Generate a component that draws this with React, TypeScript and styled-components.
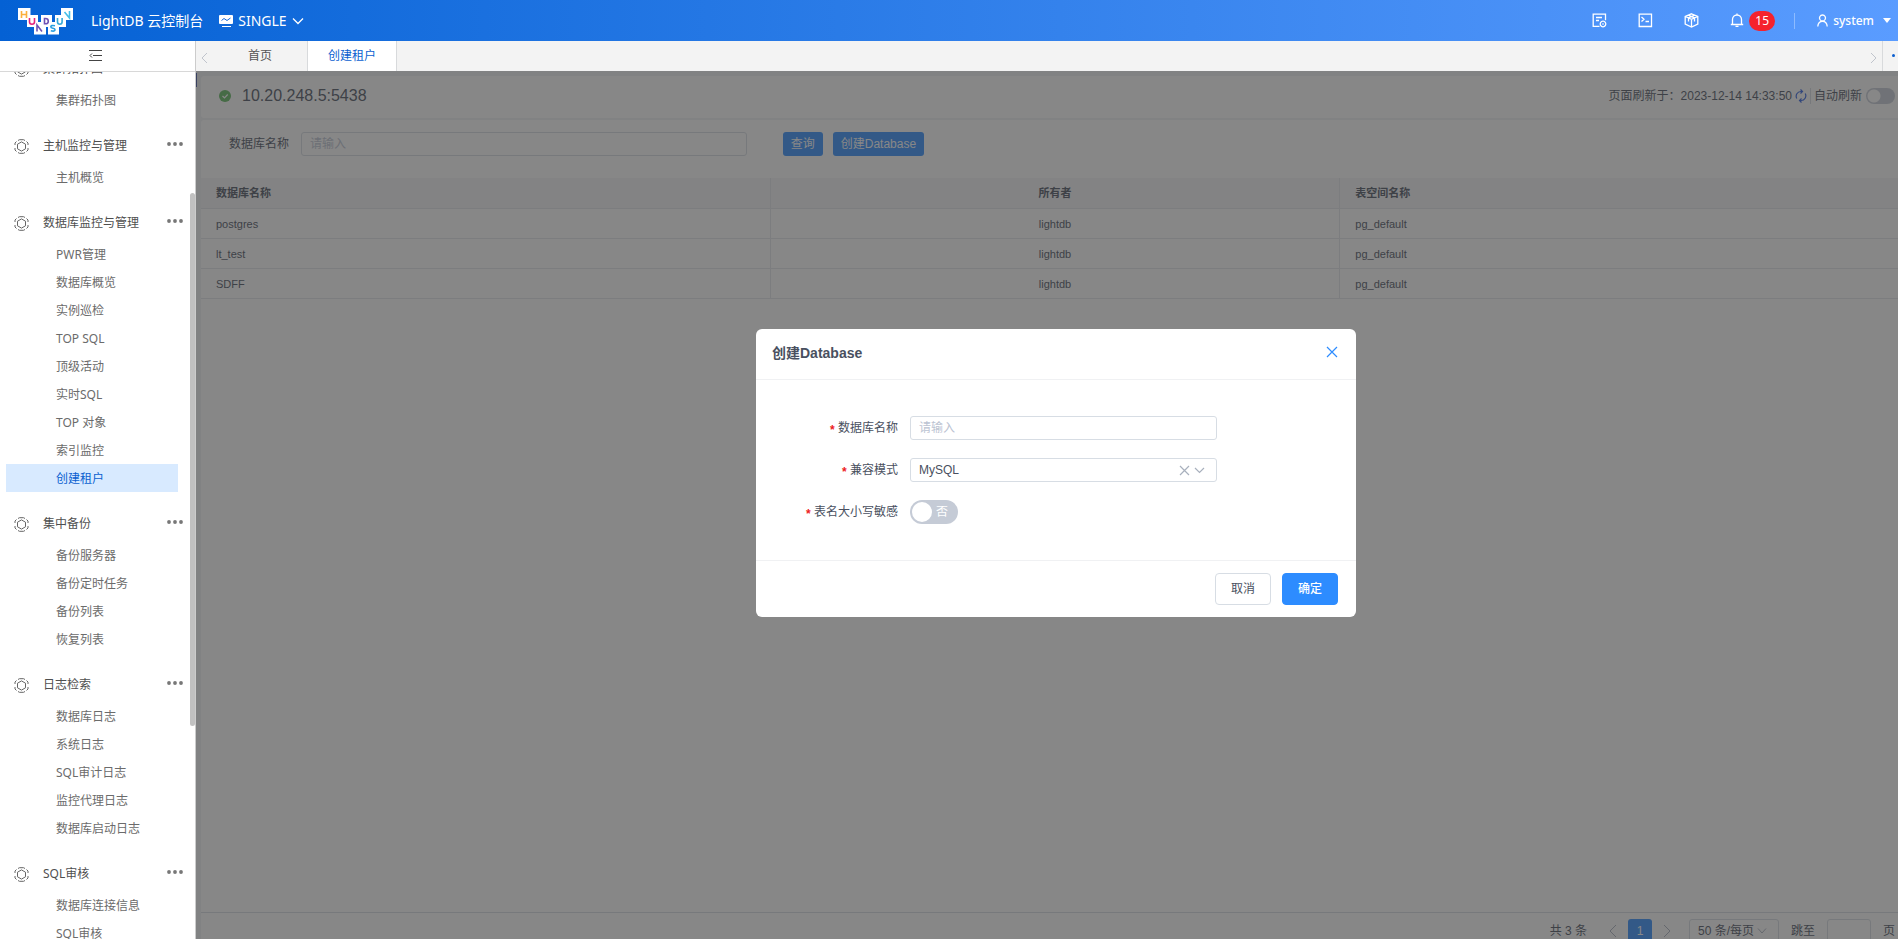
import React from 'react';
import styled, { createGlobalStyle } from 'styled-components';

const ui = `'Noto Sans', 'Noto Sans CJK SC', sans-serif`;
const arial = `'Liberation Sans', 'Noto Sans CJK SC', sans-serif`;

const GlobalStyle = createGlobalStyle`
  *, *::before, *::after { box-sizing: border-box; }
  body { margin: 0; background: #fff; font: 12px/20px ${arial}; color: #495060; overflow: hidden; }
  button, input, select { font: inherit; color: inherit; margin: 0; }
  button { cursor: pointer; }
  ul { list-style: none; margin: 0; padding: 0; }
  a { color: inherit; text-decoration: none; }
  svg { display: block; flex: none; }
`;

const Page = styled.div`
  display: flex;
  flex-direction: column;
  height: 100vh;
  overflow: hidden;
`;

/* ---------- header ---------- */
const Header = styled.header`
  display: flex;
  align-items: center;
  flex: none;
  height: 41px;
  padding: 0 7px 0 18px;
  color: #fff;
  font-family: ${ui};
  background: linear-gradient(90deg, #0461d4 0%, #5a9cff 100%);
`;

const Product = styled.span`
  margin-left: 18px;
  font-size: 14px;
`;

const ClusterButton = styled.button`
  display: flex;
  align-items: center;
  gap: 5px;
  margin-left: 16px;
  padding: 0;
  border: 0;
  background: none;
  font-size: 14px;
`;

const HeaderTools = styled.div`
  display: flex;
  align-items: center;
  margin-left: auto;
`;

const ToolButton = styled.button`
  display: flex;
  align-items: center;
  gap: 5px;
  margin-right: 31px;
  padding: 0;
  border: 0;
  background: none;
`;

const AlertButton = styled(ToolButton)`
  margin-right: 19px;
`;

const Badge = styled.span`
  min-width: 26px;
  height: 20px;
  border-radius: 10px;
  background: #f5222d;
  text-align: center;
  line-height: 20px;
`;

const UserButton = styled.button`
  display: flex;
  align-items: center;
  gap: 5px;
  padding: 0 0 0 22px;
  border: 0;
  background: none;
  font-weight: 500;
`;

const Divider = styled.span<{ $color: string }>`
  width: 1px;
  height: 16px;
  background: ${(p) => p.$color};
`;

const Caret = styled.span`
  margin-left: 4px;
  border: 4px solid transparent;
  border-top: 5px solid #fff;
  border-bottom: 0;
`;

/* ---------- sidebar ---------- */
const Body = styled.div`
  display: flex;
  flex: 1;
  min-height: 0;
`;

const Sidebar = styled.aside`
  position: relative;
  display: flex;
  flex-direction: column;
  flex: none;
  width: 196px;
  border-right: 1px solid #ccc;
  background: #fff;
  font-family: ${ui};
`;

const Fold = styled.button`
  display: flex;
  align-items: center;
  justify-content: center;
  flex: none;
  height: 31px;
  padding: 0 4px 2px 0;
  border: 0;
  border-bottom: 1px solid #d8d8d8;
  background: #fff;
`;

const MenuScroll = styled.nav`
  flex: 1;
  min-height: 0;
  overflow: hidden;
`;

const MenuList = styled.div`
  margin-top: -35px;
`;

const GroupTitle = styled.div`
  display: flex;
  align-items: center;
  height: 49px;
  padding: 15px 12px 0 14px;
  color: #4f4f4f;

  & > span { margin-left: 14px; }
  & > button { margin: 0 0 4px auto; }
`;

const MoreButton = styled.button`
  display: flex;
  padding: 0;
  border: 0;
  background: none;
`;

const MenuItem = styled.a<{ $active?: boolean }>`
  display: block;
  height: 28px;
  margin: 0 17px 0 6px;
  padding-left: 50px;
  line-height: 30px;
  color: ${(p) => (p.$active ? '#0b5fd0' : '#6b6b6b')};
  background: ${(p) => (p.$active ? '#d8eaff' : 'transparent')};
`;

const ScrollThumb = styled.div`
  position: absolute;
  top: 152px;
  right: 0;
  width: 5px;
  height: 62%;
  max-height: 533px;
  border-radius: 3px;
  background: #c1c1c1;
`;

/* ---------- workspace ---------- */
const Workspace = styled.div`
  display: flex;
  flex-direction: column;
  flex: 1;
  min-width: 0;
  margin-right: -18px;
`;

const TabBar = styled.div`
  display: flex;
  flex: none;
  height: 30px;
  background: #f3f3f3;
  font-family: ${ui};
`;

const TabArrow = styled.button`
  display: flex;
  align-items: center;
  justify-content: center;
  width: 17px;
  padding: 4px 0 0;
  border: 0;
  background: none;
`;

const Tab = styled.a<{ $active?: boolean; $pad: number }>`
  padding: 0 ${(p) => p.$pad}px;
  border-right: 1px solid #d8dadc;
  line-height: 30px;
  color: ${(p) => (p.$active ? '#0b5fd0' : '#555')};
  background: ${(p) => (p.$active ? '#fff' : 'transparent')};
`;

const TabSpacer = styled.div`
  flex: 1;
`;

const TabMore = styled.button`
  display: flex;
  justify-content: center;
  gap: 3px;
  width: 34px;
  padding: 13px 0 0;
  border: 0;
  border-left: 1px solid #d8dadc;
  background: none;

  & > i { width: 3px; height: 3px; border-radius: 2px; background: #0b5fd0; }
`;

const Stage = styled.div`
  position: relative;
  display: flex;
  flex: 1;
  min-height: 0;
  padding: 5px 6px 0 5px;
  background: #f0f2f5;

  &::before {
    content: '';
    position: absolute;
    top: 2px;
    left: 0;
    width: 1px;
    height: 14px;
    background: #3c50a0;
  }
`;

const Content = styled.main`
  display: flex;
  flex-direction: column;
  gap: 2px;
  flex: 1;
  min-width: 0;
  margin-bottom: -9px;
`;

const InstanceBar = styled.section`
  display: flex;
  align-items: center;
  flex: none;
  height: 42px;
  padding: 0 15px 2px 18px;
  border-radius: 3px;
  background: #fff;
`;

const Address = styled.h1`
  margin: 0 auto 0 11px;
  font-size: 16px;
  font-weight: 400;
`;

const RefreshInfo = styled.div`
  display: flex;
  align-items: center;
  gap: 3px;
`;

const SmallSwitch = styled.input`
  appearance: none;
  width: 29px;
  height: 16px;
  margin: 0;
  border-radius: 8px;
  background: radial-gradient(circle at 8px 8px, #fff 6px, #c5cbd6 7px);
`;

const SwitchLabel = styled.label`
  display: flex;
  align-items: center;
  gap: 4px;
`;

const Panel = styled.section`
  display: flex;
  flex-direction: column;
  flex: 1;
  min-height: 0;
  border-radius: 3px 3px 0 0;
  background: #fff;
`;

const SearchForm = styled.form`
  display: flex;
  align-items: center;
  flex: none;
  padding: 12px 0 22px 28px;
`;

const TextInput = styled.input`
  width: 100%;
  height: 24px;
  padding: 0 8px;
  border: 1px solid #d7dde4;
  border-radius: 3px;
  background: #fff;
  outline: 0;

  &::placeholder { color: #bbc3d2; opacity: 1; }
`;

const SearchField = styled.label`
  display: flex;
  align-items: center;
  gap: 12px;
  flex: none;
  width: 30.8%;
  margin-right: 36px;

  & > span { flex: none; }
`;

const PrimaryButton = styled.button`
  height: 24px;
  margin-right: 10px;
  padding: 0 8px;
  border: 0;
  border-radius: 3px;
  background: #2d8cff;
  color: #fff;
`;

const Table = styled.table`
  width: 100%;
  border-collapse: separate;
  border-spacing: 0;
  table-layout: fixed;
  font-size: 11px;
  text-align: left;

  th, td { height: 30px; padding: 0 15px; border-bottom: 1px solid #e4e7eb; border-right: 1px solid #e4e7eb; }
  th { height: 31px; background: #f5f6f8; font-weight: 700; }
  th:nth-child(2), td:nth-child(2) { text-align: center; }
`;

const TableArea = styled.div`
  flex: 1;
  min-height: 0;
`;

const Pager = styled.nav`
  display: flex;
  align-items: center;
  justify-content: flex-end;
  flex: none;
  height: 36px;
  padding-right: 15px;
  border-top: 1px solid #d7dde4;
`;

const PagerButton = styled.button<{ $current?: boolean }>`
  display: flex;
  align-items: center;
  justify-content: center;
  width: 24px;
  height: 24px;
  margin-left: 14px;
  padding: 0;
  border: 0;
  border-radius: 3px;
  background: ${(p) => (p.$current ? '#2d8cff' : 'none')};
  color: ${(p) => (p.$current ? '#fff' : 'inherit')};

  & + & { margin-left: 3px; }
`;

const SelectWrap = styled.span<{ $pager?: boolean }>`
  position: relative;
  width: ${(p) => (p.$pager ? '90px' : '100%')};
  margin: ${(p) => (p.$pager ? '0 12px 0 10px' : '0')};

  select {
    appearance: none;
    display: block;
    width: 100%;
    height: 24px;
    padding: 0 8px;
    border: 1px solid #d7dde4;
    border-radius: 3px;
    background: #fff;
    outline: 0;
  }
`;

const SelectIcons = styled.span`
  position: absolute;
  top: 0;
  right: 12px;
  display: flex;
  align-items: center;
  gap: 4px;
  height: 24px;
  pointer-events: none;
`;

const JumpField = styled.label`
  display: flex;
  align-items: center;
  gap: 12px;

  & > input { width: 44px; }
`;

/* ---------- dialog ---------- */
const Mask = styled.div`
  position: absolute;
  inset: 0;
  display: flex;
  align-items: flex-start;
  justify-content: center;
  padding-top: 258px;
  background: rgba(55, 55, 55, 0.6);
`;

const Dialog = styled.div`
  width: 600px;
  border-radius: 6px;
  background: #fff;
`;

const DialogHead = styled.header`
  display: flex;
  align-items: center;
  justify-content: space-between;
  height: 51px;
  padding: 0 18px 2px 16px;
  border-bottom: 1px solid #f0f1f3;
`;

const DialogTitle = styled.h2`
  margin: 0;
  font-size: 14px;
  font-weight: 700;
`;

const CloseButton = styled.button`
  display: flex;
  padding: 0 0 2px;
  border: 0;
  background: none;
`;

const DialogForm = styled.form`
  display: flex;
  flex-direction: column;
  gap: 18px;
  height: 180px;
  padding: 36px 139px 0 16px;
`;

const FormRow = styled.div`
  display: flex;
  align-items: center;
  height: 24px;

  & > label {
    flex: none;
    width: 138px;
    padding-right: 12px;
    text-align: right;
  }
  & > label::before {
    content: '*';
    margin-right: 2px;
    color: #ed1c24;
    font: 700 12px/12px 'Liberation Mono', monospace;
    vertical-align: -2px;
  }
`;

const SwitchWrap = styled.span`
  position: relative;
  display: flex;
  width: 48px;
  height: 24px;

  & > input {
    appearance: none;
    width: 48px;
    height: 24px;
    border-radius: 12px;
    background: #c5cbd6;
  }
  & > input::before {
    content: '';
    display: block;
    width: 20px;
    height: 20px;
    margin: 2px;
    border-radius: 10px;
    background: #fff;
  }
  & > span {
    position: absolute;
    top: 2px;
    right: 10px;
    color: #fff;
    pointer-events: none;
  }
`;

const DialogFoot = styled.footer`
  display: flex;
  justify-content: flex-end;
  gap: 11px;
  padding: 12px 18px;
  border-top: 1px solid #f0f1f3;
`;

const DialogButton = styled.button<{ $primary?: boolean }>`
  width: 56px;
  height: 32px;
  padding: 0;
  border: 1px solid ${(p) => (p.$primary ? '#2d8cff' : '#d7dde4')};
  border-radius: 4px;
  background: ${(p) => (p.$primary ? '#2d8cff' : '#fff')};
  color: ${(p) => (p.$primary ? '#fff' : '#495060')};
  font-weight: ${(p) => (p.$primary ? 500 : 400)};
`;

/* ---------- drawings ---------- */
type Stroke = { d: string; w: number; h: number; color?: string; sw?: number };
const Line = ({ d, w, h, color = '#fff', sw = 1.3 }: Stroke) => (
  <svg width={w} height={h} viewBox={`0 0 ${w} ${h}`} fill="none" stroke={color} strokeWidth={sw} aria-hidden>
    <path d={d} />
  </svg>
);

const Logo = () => (
  <svg width="55" height="28" viewBox="0 0 55 28" fill="none" aria-label="Hundsun">
    <path
      fill="#fff"
      d="M0 1h12.500v12H0zM9 8h11v12H9zM16 15h12v12.500H16zM23 8h11v12H23zM30 15h11v12.500H30zM37 8h11v12H37zM43 1h12v12H43z"
    />
    <g strokeWidth="1.600">
      <path stroke="#fbb03b" d="M3.500 4v7M8.500 4v7M3.500 7.500h5" />
      <path stroke="#e5237e" d="M11.500 11v4q0 2.200 2.500 2.200t2.500-2.200v-4" />
      <path stroke="#6f52b5" d="M19 24.500v-6.500l5 6.500" />
      <path stroke="#6f52b5" d="M26.500 11.500v5.300h1q2.800 0 2.800-2.650t-2.800-2.650z" />
      <path stroke="#2a9fe0" d="M37 18.800q-4.200-.8-4.200 1 0 1.200 2.100 1.500t2.100 1.500q0 2-4.200 1" />
      <path stroke="#35a9d8" d="M39.500 11v4q0 2.200 2.300 2.200t2.300-2.200v-4" />
      <path stroke="#46bfe8" d="M46.500 5l5 6V4" />
    </g>
  </svg>
);

const MonitorIcon = () => (
  <svg width="14" height="13" viewBox="0 0 14 13" aria-hidden>
    <rect width="14" height="9" y="1" rx="1" fill="#fff" />
    <path d="M2.500 6.500 5 4.500l3 2 3.500-2.500" fill="none" stroke="#1668dc" />
    <path d="M3 12.500h9" stroke="#fff" />
  </svg>
);

const GearIcon = () => (
  <svg width="15" height="15" viewBox="0 0 15 15" fill="none" stroke="#666" aria-hidden>
    <path d="M4 1.500 5.500.7h4l1.500.8M12.500 2.500l1.500 1.500v2M14 9v2l-1.500 1.500M11 13.500l-1.500.8h-4L4 13.500M2.500 12.500 1 11V9M1 6V4l1.500-1.500" />
    <path d="M7.500 2.900 11.500 5.200v4.600l-4 2.300-4-2.300V5.200z" />
  </svg>
);

const Dots = () => (
  <svg width="16" height="4" viewBox="0 0 16 4" fill="#777" aria-hidden>
    <circle cx="2" cy="2" r="1.900" />
    <circle cx="8" cy="2" r="1.900" />
    <circle cx="14" cy="2" r="1.900" />
  </svg>
);

const StatusIcon = () => (
  <svg width="12" height="12" viewBox="0 0 12 12" aria-hidden>
    <circle cx="6" cy="6" r="6" fill="#5cb85c" />
    <path d="m3.500 6 2 2 3.200-3.500" fill="none" stroke="#fff" strokeWidth="1.200" />
  </svg>
);

const RefreshIcon = () => (
  <svg width="12" height="14" viewBox="0 0 12 14" fill="none" stroke="#2d5fe0" strokeWidth="1.200" aria-hidden>
    <path d="M1.800 9.500A4.700 4.700 0 0 1 6 2.500h1M10.200 4.500A4.700 4.700 0 0 1 6 11.500H5" />
    <path d="M5.500.5 7.500 2.500l-2 2M6.500 9.500l-2 2 2 2" />
  </svg>
);

/* ---------- data ---------- */
const groups: { title: string; items: string[] }[] = [
  { title: '集群拓扑图', items: ['集群拓扑图'] },
  { title: '主机监控与管理', items: ['主机概览'] },
  {
    title: '数据库监控与管理',
    items: ['PWR管理', '数据库概览', '实例巡检', 'TOP SQL', '顶级活动', '实时SQL', 'TOP 对象', '索引监控', '创建租户'],
  },
  { title: '集中备份', items: ['备份服务器', '备份定时任务', '备份列表', '恢复列表'] },
  { title: '日志检索', items: ['数据库日志', '系统日志', 'SQL审计日志', '监控代理日志', '数据库启动日志'] },
  { title: 'SQL审核', items: ['数据库连接信息', 'SQL审核'] },
];

const rows = [
  ['postgres', 'lightdb', 'pg_default'],
  ['lt_test', 'lightdb', 'pg_default'],
  ['SDFF', 'lightdb', 'pg_default'],
];

export default function App() {
  return (
    <Page>
      <GlobalStyle />
      <Header>
        <Logo />
        <Product>LightDB 云控制台</Product>
        <ClusterButton>
          <MonitorIcon />
          SINGLE
          <Line w={12} h={8} d="m1 1.500 5 5 5-5" />
        </ClusterButton>
        <HeaderTools>
          <ToolButton aria-label="任务">
            <Line w={15} h={15} d="M7.500 13.400H1.200V1.200h12.300v6M4 4.500h6M4 7.500h3M11 8.200a2.800 2.800 0 1 0 .01 0zM11 10.200v1.600" />
          </ToolButton>
          <ToolButton aria-label="终端">
            <Line w={15} h={15} d="M1.200 1.200h12.300v12.300H1.200zM3.500 4l2.500 2.300-2.500 2.300M7.500 8.500h3.500" />
          </ToolButton>
          <ToolButton aria-label="部署">
            <Line w={15} h={15} d="m7.500.8 6.300 2.700v7.500l-6.300 3-6.300-3V3.500zM1.200 3.500l6.300 2.800 6.300-2.800M7.500 6.300V14M4.200 2.200l6.300 2.800v3.500M10.800 2.200 4.500 5v3.500" />
          </ToolButton>
          <AlertButton aria-label="告警">
            <Line w={14} h={15} d="M.8 11.500h12.400M2.500 11.500V6.500a4.500 4.500 0 0 1 9 0v5M7 .4v1.600M5.500 13.400h3" />
            <Badge>15</Badge>
          </AlertButton>
          <Divider $color="#8dbbff" />
          <UserButton>
            <Line w={11} h={13} d="M5.500 1a3 3 0 1 0 .01 0zM.8 12.500C1 9 3 7.300 5.500 7.300S10 9 10.200 12.500" />
            system
            <Caret />
          </UserButton>
        </HeaderTools>
      </Header>

      <Body>
        <Sidebar>
          <Fold aria-label="收起菜单">
            <Line w={13} h={11} color="#444" sw={1} d="M0 .5h13M4 5.500h9M0 10.500h13M3 3.500l-2 2 2 2" />
          </Fold>
          <MenuScroll>
            <MenuList>
              {groups.map((group) => (
                <section key={group.title}>
                  <GroupTitle>
                    <GearIcon />
                    <span>{group.title}</span>
                    <MoreButton aria-label="更多">
                      <Dots />
                    </MoreButton>
                  </GroupTitle>
                  <ul>
                    {group.items.map((item) => (
                      <li key={item}>
                        <MenuItem href="#" $active={item === '创建租户'}>
                          {item}
                        </MenuItem>
                      </li>
                    ))}
                  </ul>
                </section>
              ))}
            </MenuList>
          </MenuScroll>
          <ScrollThumb />
        </Sidebar>

        <Workspace>
          <TabBar>
            <TabArrow aria-label="向左">
              <Line w={7} h={12} color="#c0c4cc" sw={1} d="M6 1 1 6l5 5" />
            </TabArrow>
            <Tab href="#" $pad={35}>首页</Tab>
            <Tab href="#" $pad={20} $active>创建租户</Tab>
            <TabSpacer />
            <TabArrow aria-label="向右">
              <Line w={7} h={12} color="#c0c4cc" sw={1} d="m1 1 5 5-5 5" />
            </TabArrow>
            <TabMore aria-label="更多标签">
              <i />
              <i />
              <i />
            </TabMore>
          </TabBar>

          <Stage>
            <Content>
              <InstanceBar>
                <StatusIcon />
                <Address>10.20.248.5:5438</Address>
                <RefreshInfo>
                  <span>页面刷新于：2023-12-14 14:33:50</span>
                  <RefreshIcon />
                  <Divider $color="#d7dde4" />
                  <SwitchLabel>
                    自动刷新
                    <SmallSwitch type="checkbox" role="switch" />
                  </SwitchLabel>
                </RefreshInfo>
              </InstanceBar>

              <Panel>
                <SearchForm>
                  <SearchField>
                    <span>数据库名称</span>
                    <TextInput placeholder="请输入" />
                  </SearchField>
                  <PrimaryButton type="button">查询</PrimaryButton>
                  <PrimaryButton type="button">创建Database</PrimaryButton>
                </SearchForm>
                <TableArea>
                  <Table>
                    <thead>
                      <tr>
                        <th>数据库名称</th>
                        <th>所有者</th>
                        <th>表空间名称</th>
                      </tr>
                    </thead>
                    <tbody>
                      {rows.map((row) => (
                        <tr key={row[0]}>
                          {row.map((cell) => (
                            <td key={cell}>{cell}</td>
                          ))}
                        </tr>
                      ))}
                    </tbody>
                  </Table>
                </TableArea>
                <Pager>
                  <span>共 3 条</span>
                  <PagerButton aria-label="上一页">
                    <Line w={8} h={14} color="#a8b0bd" sw={1} d="M7 1 1 7l6 6" />
                  </PagerButton>
                  <PagerButton $current>1</PagerButton>
                  <PagerButton aria-label="下一页">
                    <Line w={8} h={14} color="#a8b0bd" sw={1} d="m1 1 6 6-6 6" />
                  </PagerButton>
                  <SelectWrap $pager>
                    <select aria-label="每页条数">
                      <option>50 条/每页</option>
                    </select>
                    <SelectIcons>
                      <Line w={10} h={6} color="#a8b0bd" sw={1} d="m1 .5 4 4.500L9 .5" />
                    </SelectIcons>
                  </SelectWrap>
                  <JumpField>
                    跳至
                    <TextInput />
                    页
                  </JumpField>
                </Pager>
              </Panel>
            </Content>

            <Mask>
              <Dialog role="dialog" aria-labelledby="dialog-title">
                <DialogHead>
                  <DialogTitle id="dialog-title">创建Database</DialogTitle>
                  <CloseButton aria-label="关闭">
                    <Line w={12} h={12} color="#2d8cff" sw={1.200} d="m1 1 10 10M11 1 1 11" />
                  </CloseButton>
                </DialogHead>
                <DialogForm>
                  <FormRow>
                    <label htmlFor="db-name">数据库名称</label>
                    <TextInput id="db-name" placeholder="请输入" />
                  </FormRow>
                  <FormRow>
                    <label htmlFor="db-mode">兼容模式</label>
                    <SelectWrap>
                      <select id="db-mode">
                        <option>MySQL</option>
                      </select>
                      <SelectIcons>
                        <Line w={11} h={11} color="#a8b0bd" sw={1.200} d="m1 1 9 9M10 1 1 10" />
                        <Line w={11} h={7} color="#a8b0bd" sw={1.200} d="m1 1 4.500 4.500L10 1" />
                      </SelectIcons>
                    </SelectWrap>
                  </FormRow>
                  <FormRow>
                    <label htmlFor="db-case">表名大小写敏感</label>
                    <SwitchWrap>
                      <input id="db-case" type="checkbox" role="switch" />
                      <span>否</span>
                    </SwitchWrap>
                  </FormRow>
                </DialogForm>
                <DialogFoot>
                  <DialogButton type="button">取消</DialogButton>
                  <DialogButton type="button" $primary>确定</DialogButton>
                </DialogFoot>
              </Dialog>
            </Mask>
          </Stage>
        </Workspace>
      </Body>
    </Page>
  );
}
